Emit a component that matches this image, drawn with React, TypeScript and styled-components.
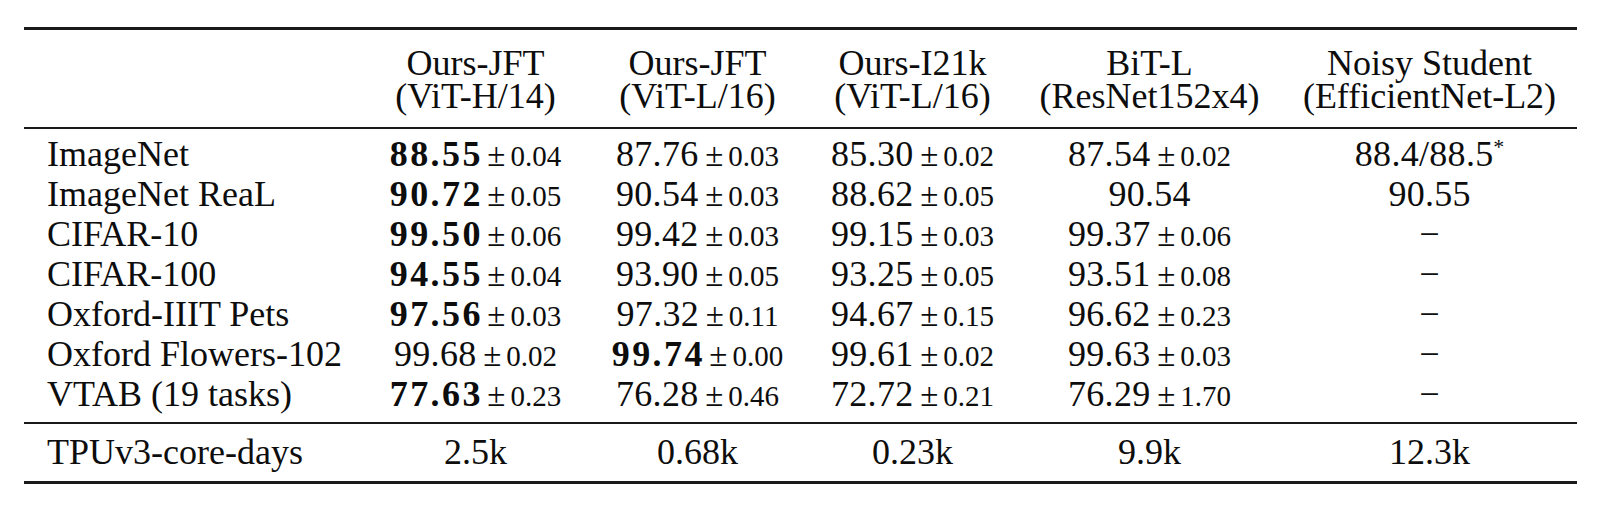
import styled, { createGlobalStyle } from 'styled-components';

const GlobalStyle = createGlobalStyle`
  html, body {
    margin: 0;
    padding: 0;
    background: #ffffff;
  }
  body {
    font-family: "Liberation Serif", "Times New Roman", serif;
    color: #0d0d0d;
  }
`;

const COLUMNS = '340px 223px 221px 209px 265px 295px';

const Page = styled.div`
  width: 1600px;
  height: 522px;
  padding-top: 27px;
  box-sizing: border-box;
`;

const Table = styled.div`
  width: 1553px;
  margin-left: 24px;
  display: flex;
  flex-direction: column;
`;

const Rule = styled.div<{ $weight: number }>`
  height: ${({ $weight }) => $weight}px;
  background-color: #1a1a1a;
`;

const Section = styled.div<{ $top: number; $bottom: number }>`
  padding-top: ${({ $top }) => $top}px;
  padding-bottom: ${({ $bottom }) => $bottom}px;
`;

const Row = styled.div<{ $lineHeight?: number }>`
  display: grid;
  grid-template-columns: ${COLUMNS};
  font-size: 36px;
  line-height: ${({ $lineHeight }) => $lineHeight ?? 40}px;
  height: ${({ $lineHeight }) => $lineHeight ?? 40}px;
  white-space: nowrap;
`;

const HeadRow = styled(Row)`
  height: auto;
`;

const Label = styled.div`
  padding-left: 23px;
  text-align: left;
`;

const Cell = styled.div`
  text-align: center;
`;

const HeadLine = styled.div`
  display: block;
`;

const Value = styled.span<{ $bold?: boolean }>`
  font-weight: ${({ $bold }) => ($bold ? 700 : 400)};
  letter-spacing: ${({ $bold }) => ($bold ? '2.4px' : '0.3px')};
  margin-right: ${({ $bold }) => ($bold ? '-2.4px' : '-0.3px')};
`;

const Spread = styled.span`
  font-size: 29px;
  line-height: 0;
  margin-left: 5px;
`;

const PmSign = styled.span`
  display: inline-block;
  width: 22px;
  margin-right: 3px;
  font-size: 33px;
  line-height: 0;
  text-align: center;
`;

const Star = styled.sup`
  font-size: 22px;
  line-height: 0;
  vertical-align: 12px;
`;

type Score = { v: string; sd?: string; bold?: boolean } | null;

const headers: [string, string][] = [
  ['Ours-JFT', '(ViT-H/14)'],
  ['Ours-JFT', '(ViT-L/16)'],
  ['Ours-I21k', '(ViT-L/16)'],
  ['BiT-L', '(ResNet152x4)'],
  ['Noisy Student', '(EfficientNet-L2)'],
];

const rows: { name: string; scores: (Score | 'star')[] }[] = [
  {
    name: 'ImageNet',
    scores: [
      { v: '88.55', sd: '0.04', bold: true },
      { v: '87.76', sd: '0.03' },
      { v: '85.30', sd: '0.02' },
      { v: '87.54', sd: '0.02' },
      'star',
    ],
  },
  {
    name: 'ImageNet ReaL',
    scores: [
      { v: '90.72', sd: '0.05', bold: true },
      { v: '90.54', sd: '0.03' },
      { v: '88.62', sd: '0.05' },
      { v: '90.54' },
      { v: '90.55' },
    ],
  },
  {
    name: 'CIFAR-10',
    scores: [
      { v: '99.50', sd: '0.06', bold: true },
      { v: '99.42', sd: '0.03' },
      { v: '99.15', sd: '0.03' },
      { v: '99.37', sd: '0.06' },
      null,
    ],
  },
  {
    name: 'CIFAR-100',
    scores: [
      { v: '94.55', sd: '0.04', bold: true },
      { v: '93.90', sd: '0.05' },
      { v: '93.25', sd: '0.05' },
      { v: '93.51', sd: '0.08' },
      null,
    ],
  },
  {
    name: 'Oxford-IIIT Pets',
    scores: [
      { v: '97.56', sd: '0.03', bold: true },
      { v: '97.32', sd: '0.11' },
      { v: '94.67', sd: '0.15' },
      { v: '96.62', sd: '0.23' },
      null,
    ],
  },
  {
    name: 'Oxford Flowers-102',
    scores: [
      { v: '99.68', sd: '0.02' },
      { v: '99.74', sd: '0.00', bold: true },
      { v: '99.61', sd: '0.02' },
      { v: '99.63', sd: '0.03' },
      null,
    ],
  },
  {
    name: 'VTAB (19 tasks)',
    scores: [
      { v: '77.63', sd: '0.23', bold: true },
      { v: '76.28', sd: '0.46' },
      { v: '72.72', sd: '0.21' },
      { v: '76.29', sd: '1.70' },
      null,
    ],
  },
];

const compute = ['2.5k', '0.68k', '0.23k', '9.9k', '12.3k'];

function ScoreCell({ score }: { score: Score | 'star' }) {
  if (score === 'star') {
    return (
      <Cell>
        <Value>88.4/88.5</Value>
        <Star>*</Star>
      </Cell>
    );
  }
  if (!score) {
    return <Cell>−</Cell>;
  }
  return (
    <Cell>
      <Value $bold={score.bold}>{score.v}</Value>
      {score.sd && (
        <Spread>
          <PmSign>±</PmSign>
          {score.sd}
        </Spread>
      )}
    </Cell>
  );
}

export default function App() {
  return (
    <Page>
      <GlobalStyle />
      <Table>
        <Rule $weight={3} />
        <Section $top={17} $bottom={14}>
          <HeadRow $lineHeight={33}>
            <Label />
            {headers.map(([a, b], i) => (
              <Cell key={i}>
                <HeadLine>{a}</HeadLine>
                <HeadLine>{b}</HeadLine>
              </Cell>
            ))}
          </HeadRow>
        </Section>
        <Rule $weight={2} />
        <Section $top={5} $bottom={8}>
          {rows.map(row => (
            <Row key={row.name}>
              <Label>{row.name}</Label>
              {row.scores.map((s, i) => (
                <ScoreCell key={i} score={s} />
              ))}
            </Row>
          ))}
        </Section>
        <Rule $weight={2} />
        <Section $top={8} $bottom={9}>
          <Row>
            <Label>TPUv3-core-days</Label>
            {compute.map((c, i) => (
              <Cell key={i}>{c}</Cell>
            ))}
          </Row>
        </Section>
        <Rule $weight={3} />
      </Table>
    </Page>
  );
}
